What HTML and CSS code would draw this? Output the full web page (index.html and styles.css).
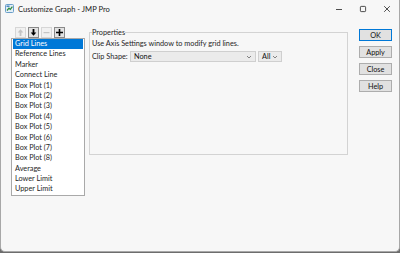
FILE: index.html
```html
<!DOCTYPE html>
<html lang="en">
<head>
<meta charset="utf-8">
<title>Customize Graph - JMP Pro</title>
<link rel="stylesheet" href="styles.css">
</head>
<body>
<div class="window">
  <div class="titlebar">
    <svg class="appicon" width="9" height="9" viewBox="0 0 9 9">
      <rect x="0.5" y="0.5" width="8" height="8" rx="1" fill="#e3eef7" stroke="#6a9fc9"/>
      <path d="M2 6.5 L4 4.2 L5.3 5.4 L7.4 2.6" fill="none" stroke="#2f8a3c" stroke-width="1.2"/>
      <path d="M1.5 2.2 H4.5" stroke="#2a6fb4" stroke-width="1.2"/>
    </svg>
    <span class="title">Customize Graph - JMP Pro</span>
    <div class="controls">
      <span class="ctl"><svg width="10" height="10" viewBox="0 0 10 10"><path d="M2 5.5 H8" stroke="#222" stroke-width="0.8"/></svg></span>
      <span class="ctl"><svg width="10" height="10" viewBox="0 0 10 10"><rect x="2.4" y="2.4" width="5.2" height="5.2" rx="0.8" fill="none" stroke="#222" stroke-width="0.8"/></svg></span>
      <span class="ctl"><svg width="10" height="10" viewBox="0 0 10 10"><path d="M2.2 2.2 L7.8 7.8 M7.8 2.2 L2.2 7.8" stroke="#222" stroke-width="0.8"/></svg></span>
    </div>
  </div>
  <div class="content">
    <div class="leftcol">
      <div class="toolbar">
        <span class="tb off"><svg width="9" height="9" viewBox="0 0 9 9"><path d="M4.5 1.2 L7.3 4.5 H5.4 V8 H3.6 V4.5 H1.7 Z" fill="#c4c4c4"/></svg></span>
        <span class="tb on"><svg width="9" height="9" viewBox="0 0 9 9"><path d="M4.5 7.8 L7.3 4.5 H5.4 V1 H3.6 V4.5 H1.7 Z" fill="#000"/></svg></span>
        <span class="tb off"><svg width="9" height="9" viewBox="0 0 9 9"><path d="M1.5 4 H7.5 V5.2 H1.5 Z" fill="#c4c4c4"/></svg></span>
        <span class="tb on"><svg width="9" height="9" viewBox="0 0 9 9"><path d="M3.7 1 H5.3 V3.7 H8 V5.3 H5.3 V8 H3.7 V5.3 H1 V3.7 H3.7 Z" fill="#000"/></svg></span>
      </div>
      <ul class="list">
        <li class="sel">Grid Lines</li>
        <li>Reference Lines</li>
        <li>Marker</li>
        <li>Connect Line</li>
        <li>Box Plot (1)</li>
        <li>Box Plot (2)</li>
        <li>Box Plot (3)</li>
        <li>Box Plot (4)</li>
        <li>Box Plot (5)</li>
        <li>Box Plot (6)</li>
        <li>Box Plot (7)</li>
        <li>Box Plot (8)</li>
        <li>Average</li>
        <li>Lower Limit</li>
        <li>Upper Limit</li>
      </ul>
    </div>
    <fieldset class="group">
      <legend>Properties</legend>
      <p class="hint">Use Axis Settings window to modify grid lines.</p>
      <div class="cliprow">
        <span class="label">Clip Shape:</span>
        <div class="combo wide"><span>None</span><svg width="6" height="4" viewBox="0 0 6 4"><path d="M1 1 L3 3 L5 1" fill="none" stroke="#555" stroke-width="0.7"/></svg></div>
        <div class="combo small"><span>All</span><svg width="6" height="4" viewBox="0 0 6 4"><path d="M1 1 L3 3 L5 1" fill="none" stroke="#555" stroke-width="0.7"/></svg></div>
      </div>
    </fieldset>
    <div class="buttons">
      <span class="btn default">OK</span>
      <span class="btn">Apply</span>
      <span class="btn">Close</span>
      <span class="btn">Help</span>
    </div>
  </div>
</div>
</body>
</html>
```
FILE: styles.css
```css
* { box-sizing: border-box; }
html, body { margin: 0; padding: 0; }
body {
  width: 400px;
  height: 253px;
  background: #6d6d6d;
  font-family: "Lato", "Noto Sans", sans-serif;
  font-size: 7.3px;
  color: #1f1f1f;
  overflow: hidden;
}
.window {
  width: 400px;
  height: 252px;
  background: #f7f7f7;
  border: 1px solid #a8a8a8;
  border-top: none;
  border-radius: 0 0 5px 5px;
  display: flex;
  flex-direction: column;
}
.titlebar {
  height: 17px;
  display: flex;
  align-items: center;
  padding-left: 4px;
}
.appicon { display: block; flex: none; }
.title {
  margin-left: 4px;
  font-size: 7.6px;
  color: #1b1b1b;
}
.controls {
  margin-left: auto;
  display: flex;
  align-items: center;
  gap: 14px;
  margin-right: 7px;
}
.ctl { width: 10px; height: 10px; display: block; }
.ctl svg { display: block; }
.content {
  flex: 1;
  display: flex;
  align-items: flex-start;
  padding: 10px 0 0 10px;
}
.leftcol {
  width: 74px;
  flex: none;
  display: flex;
  flex-direction: column;
}
.toolbar {
  display: flex;
  gap: 2px;
  padding-left: 4px;
  height: 11px;
}
.tb {
  width: 11px;
  height: 11px;
  display: flex;
  align-items: center;
  justify-content: center;
  border: 1px solid #d6d6d6;
  background: #f1f1f1;
}
.tb.on {
  border-color: #8a8a8a;
  background: #e3e3e3;
}
.tb svg { display: block; }
.list {
  list-style: none;
  margin: 0;
  padding: 0 1px;
  height: 158px;
  background: #ffffff;
  border: 1px solid #a9a9a9;
}
.list li {
  height: 10.4px;
  line-height: 10.4px;
  padding-left: 2px;
  white-space: nowrap;
}
.list li.sel {
  background: #0078d7;
  color: #ffffff;
}
.group {
  margin: 1px 0 0 4px;
  width: 259px;
  height: 127px;
  flex: none;
  border: 1px solid #d3d3d3;
  padding: 0 2px;
}
.group legend {
  padding: 0;
  line-height: 9px;
  margin-left: 0;
}
.hint {
  margin: 2px 0 0;
  line-height: 9px;
  white-space: nowrap;
}
.cliprow {
  display: flex;
  align-items: center;
  margin-top: 3px;
  height: 11px;
}
.label { width: 38px; flex: none; white-space: nowrap; }
.combo {
  height: 11px;
  display: flex;
  align-items: center;
  justify-content: space-between;
  background: #ebebeb;
  border: 1px solid #cfcfcf;
  padding: 0 3px 0 3px;
}
.combo span { color: #111; }
.combo svg { display: block; }
.combo.wide { width: 126px; }
.combo.small { width: 24px; margin-left: 2px; }
.buttons {
  margin-left: 11px;
  margin-top: 2px;
  display: flex;
  flex-direction: column;
  gap: 5px;
  width: 33px;
  flex: none;
}
.btn {
  height: 12px;
  display: flex;
  align-items: center;
  justify-content: center;
  background: #e1e1e1;
  border: 1px solid #adadad;
  color: #111;
}
.btn.default {
  border-color: #0078d7;
}
```
